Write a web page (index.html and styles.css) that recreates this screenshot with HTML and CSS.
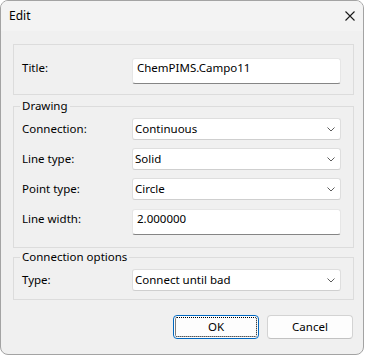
FILE: index.html
```html
<!DOCTYPE html>
<html>
<head>
<meta charset="utf-8">
<title>Edit</title>
<link rel="stylesheet" href="styles.css">
</head>
<body>
<div class="window">
  <div class="titlebar">
    <span class="title">Edit</span>
    <svg class="close" width="10" height="10" viewBox="0 0 10 10"><path d="M0.5 0.5 L9.5 9.5 M9.5 0.5 L0.5 9.5" stroke="#1a1a1a" stroke-width="1.1" fill="none"/></svg>
  </div>
  <div class="content">
    <div class="group plain">
      <div class="row">
        <span class="label">Title:</span>
        <div class="textbox">ChemPIMS.Campo11</div>
      </div>
    </div>
    <fieldset class="group drawing">
      <legend>Drawing</legend>
      <div class="rows">
        <div class="row">
          <span class="label">Connection:</span>
          <div class="combo"><span>Continuous</span><svg class="chev" width="8" height="5" viewBox="0 0 8 5"><path d="M0.5 0.5 L4 4 L7.5 0.5" stroke="#5c5c5c" stroke-width="1" fill="none"/></svg></div>
        </div>
        <div class="row">
          <span class="label">Line type:</span>
          <div class="combo"><span>Solid</span><svg class="chev" width="8" height="5" viewBox="0 0 8 5"><path d="M0.5 0.5 L4 4 L7.5 0.5" stroke="#5c5c5c" stroke-width="1" fill="none"/></svg></div>
        </div>
        <div class="row">
          <span class="label">Point type:</span>
          <div class="combo"><span>Circle</span><svg class="chev" width="8" height="5" viewBox="0 0 8 5"><path d="M0.5 0.5 L4 4 L7.5 0.5" stroke="#5c5c5c" stroke-width="1" fill="none"/></svg></div>
        </div>
        <div class="row textrow">
          <span class="label">Line width:</span>
          <div class="textbox">2.000000</div>
        </div>
      </div>
    </fieldset>
    <fieldset class="group conn">
      <legend>Connection options</legend>
      <div class="rows">
        <div class="row">
          <span class="label">Type:</span>
          <div class="combo"><span>Connect until bad</span><svg class="chev" width="8" height="5" viewBox="0 0 8 5"><path d="M0.5 0.5 L4 4 L7.5 0.5" stroke="#5c5c5c" stroke-width="1" fill="none"/></svg></div>
        </div>
      </div>
    </fieldset>
    <div class="buttons">
      <button class="btn default">OK</button>
      <button class="btn">Cancel</button>
    </div>
  </div>
</div>
</body>
</html>
```

FILE: styles.css
```css
html, body {
  margin: 0;
  padding: 0;
  background: #ffffff;
}

body {
  font-family: "Noto Sans", "Open Sans", sans-serif;
  font-size: 11.5px;
  color: #000;
}

.window {
  box-sizing: border-box;
  width: 364px;
  height: 355px;
  border: 1px solid #a3a3a3;
  border-radius: 8px;
  overflow: hidden;
  background: #f0f0f0;
  display: flex;
  flex-direction: column;
}

.titlebar {
  height: 30px;
  flex: none;
  display: flex;
  align-items: center;
  justify-content: space-between;
  padding: 0 8px 1px 8px;
  box-sizing: border-box;
  background: #f3f3f3;
}

.title {
  font-size: 12px;
  line-height: 16px;
}

.close {
  display: block;
}

.content {
  padding: 13px 9px 15px 12px;
  display: flex;
  flex-direction: column;
}

.group {
  border: 1px solid #dcdcdc;
  margin: 0;
  min-width: 0;
}

.plain {
  padding: 13px 12px 10px 8px;
}

fieldset.group {
  padding: 4px 12px 12px 8px;
}

fieldset.drawing {
  margin-top: 3px;
}

fieldset.conn {
  margin-top: 1px;
  padding-bottom: 8px;
}

legend {
  padding: 0 2px;
  margin-left: -2px;
  line-height: 16px;
}

.rows {
  display: flex;
  flex-direction: column;
  gap: 8px;
}

.row {
  display: flex;
  align-items: baseline;
}

.textrow {
  margin-top: 1px;
}

.label {
  width: 110px;
  flex: none;
  line-height: 16px;
}

.textbox {
  flex: 1;
  box-sizing: border-box;
  height: 26px;
  background: #fff;
  border: 1px solid #e6e6e6;
  border-bottom-color: #858585;
  border-radius: 3px;
  padding: 1px 4px 0 4px;
  line-height: 16px;
  white-space: nowrap;
}

.combo {
  flex: 1;
  box-sizing: border-box;
  height: 22px;
  background: #fff;
  border: 1px solid #dedede;
  border-bottom-color: #cfcfcf;
  border-radius: 3px;
  padding: 2px 5px 0 2px;
  line-height: 16px;
  display: flex;
  align-items: baseline;
  justify-content: space-between;
  white-space: nowrap;
}

.chev {
  align-self: center;
  margin-top: -1px;
}

.buttons {
  margin-top: 15px;
  margin-right: 1px;
  display: flex;
  justify-content: flex-end;
  gap: 8px;
}

.btn {
  box-sizing: border-box;
  width: 86px;
  height: 24px;
  background: #fdfdfd;
  border: 1px solid #d3d3d3;
  border-bottom-color: #c2c2c2;
  border-radius: 4px;
  font-family: "Noto Sans", "Open Sans", sans-serif;
  font-size: 11.5px;
  line-height: 16px;
  color: #000;
  padding: 0;
}

.btn.default {
  border: 1px solid #0067c0;
  outline: 1px dotted #000;
  outline-offset: -3px;
}
```
